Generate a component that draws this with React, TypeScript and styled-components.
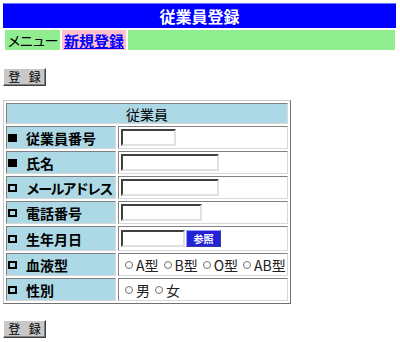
import styled, { createGlobalStyle } from "styled-components";

const GlobalStyle = createGlobalStyle`
  body {
    margin: 0;
    padding: 3px;
    background: #ffffff;
    font-family: "Noto Sans CJK JP", "DejaVu Sans", sans-serif;
    color: #000000;
  }
`;

const Page = styled.div`
  width: 394px;
`;

const TitleBar = styled.div`
  height: 25px;
  width: 393px;
  box-sizing: border-box;
  background: #0000ff;
  border-top: 1px solid #7070ff;
  color: #ffffff;
  font-size: 16px;
  font-weight: bold;
  display: flex;
  align-items: center;
  justify-content: center;
  line-height: 1;
`;

const MenuBar = styled.div`
  display: flex;
  gap: 2px;
  padding: 2px;
`;

const MenuCell = styled.div<{ $bg: string; $grow?: boolean }>`
  background: ${(p) => p.$bg};
  height: 20px;
  display: flex;
  align-items: center;
  padding: 0 2px;
  font-size: 14px;
  line-height: 1;
  flex: ${(p) => (p.$grow ? 1 : "none")};
`;

const MenuLabel = styled.span`
  letter-spacing: -1.5px;
  padding-right: 1px;
`;

const MenuLink = styled.a`
  color: #0000ff;
  font-weight: bold;
  text-decoration: underline;
  font-size: 15px;
`;

const SubmitButton = styled.button<{ $top: number }>`
  display: block;
  margin-top: ${(p) => p.$top}px;
  width: 43px;
  height: 18px;
  padding: 0 0 0 3px;
  background: #c8c8c8;
  border: 1px solid;
  border-color: #ffffff #404040 #404040 #ffffff;
  box-shadow: inset -1px -1px 0 #808080;
  font-family: inherit;
  font-size: 12px;
  line-height: 1;
  color: #000000;
  letter-spacing: 3px;
`;

const FormTable = styled.div`
  margin-top: 14px;
  width: 288px;
  box-sizing: border-box;
  border: 1px solid;
  border-color: #c8c8c8 #707070 #707070 #c8c8c8;
  padding: 2px;
  display: grid;
  grid-template-columns: 110px 1fr;
  gap: 2px;
`;

const HeaderCell = styled.div`
  grid-column: 1 / span 2;
  height: 21px;
  box-sizing: border-box;
  background: #add8e6;
  border: 1px solid;
  border-color: #808080 #d8d8d8 #d8d8d8 #808080;
  display: flex;
  align-items: center;
  justify-content: center;
  font-size: 14px;
  line-height: 1;
`;

const LabelCell = styled.div<{ $h: number }>`
  height: ${(p) => p.$h}px;
  box-sizing: border-box;
  background: #add8e6;
  border: 1px solid;
  border-color: #808080 #d8d8d8 #d8d8d8 #808080;
  display: flex;
  align-items: center;
  padding-left: 1px;
  font-size: 14px;
  font-weight: bold;
  line-height: 1;
  white-space: nowrap;
  overflow: hidden;
`;

const Mark = styled.span<{ $filled: boolean }>`
  width: 9px;
  height: 8px;
  box-sizing: border-box;
  margin-right: 9px;
  flex: none;
  background: ${(p) => (p.$filled ? "#000000" : "transparent")};
  border: 2px solid #000000;
`;

const LabelText = styled.span<{ $narrow?: boolean }>`
  letter-spacing: ${(p) => (p.$narrow ? "-1.8px" : "0")};
`;

const ValueCell = styled.div<{ $h: number }>`
  height: ${(p) => p.$h}px;
  box-sizing: border-box;
  background: #ffffff;
  border: 1px solid;
  border-color: #808080 #d8d8d8 #d8d8d8 #808080;
  display: flex;
  align-items: center;
  padding-left: 2px;
  gap: 1px;
  white-space: nowrap;
`;

const TextBox = styled.input<{ $w: number }>`
  width: ${(p) => p.$w}px;
  height: 17px;
  box-sizing: border-box;
  padding: 0;
  border: 2px solid;
  border-color: #404040 #e0e0e0 #e0e0e0 #404040;
  background: #ffffff;
  outline: none;
`;

const PickButton = styled.button`
  width: 35px;
  height: 17px;
  padding: 0;
  background: #2323d6;
  border: 1px solid;
  border-color: #9a9aff #3a3aa0 #3a3aa0 #9a9aff;
  color: #ffffff;
  font-family: inherit;
  font-size: 10px;
  font-weight: bold;
  line-height: 1;
`;

const RadioGroup = styled.div`
  display: flex;
  align-items: center;
  gap: 5px;
  padding-left: 4px;
`;

const RadioItem = styled.label`
  display: flex;
  align-items: center;
  gap: 3px;
  font-size: 14px;
  line-height: 1;
  color: #202020;
`;

const Radio = styled.input`
  appearance: none;
  margin: 0;
  width: 8px;
  height: 8px;
  border: 1px solid #707070;
  border-radius: 50%;
  background: #ffffff;
`;

type Row = {
  label: string;
  required: boolean;
  height: number;
  kind: "text" | "date" | "blood" | "sex";
  width?: number;
  narrow?: boolean;
};

const rows: Row[] = [
  { label: "従業員番号", required: true, height: 23, kind: "text", width: 55 },
  { label: "氏名", required: true, height: 23, kind: "text", width: 98 },
  { label: "メールアドレス", required: false, height: 23, kind: "text", width: 98, narrow: true },
  { label: "電話番号", required: false, height: 23, kind: "text", width: 81 },
  { label: "生年月日", required: false, height: 25, kind: "date" },
  { label: "血液型", required: false, height: 23, kind: "blood" },
  { label: "性別", required: false, height: 23, kind: "sex" },
];

const renderValue = (row: Row) => {
  switch (row.kind) {
    case "text":
      return <TextBox type="text" $w={row.width ?? 98} />;
    case "date":
      return (
        <>
          <TextBox type="text" $w={64} />
          <PickButton>参照</PickButton>
        </>
      );
    case "blood":
      return (
        <RadioGroup>
          {["A型", "B型", "O型", "AB型"].map((t) => (
            <RadioItem key={t}>
              <Radio type="radio" name="blood" />
              {t}
            </RadioItem>
          ))}
        </RadioGroup>
      );
    case "sex":
      return (
        <RadioGroup>
          {["男", "女"].map((t) => (
            <RadioItem key={t}>
              <Radio type="radio" name="sex" />
              {t}
            </RadioItem>
          ))}
        </RadioGroup>
      );
  }
};

const App: React.FC = () => {
  return (
    <Page>
      <GlobalStyle />
      <TitleBar>従業員登録</TitleBar>
      <MenuBar>
        <MenuCell $bg="#90ee90">
          <MenuLabel>メニュー</MenuLabel>
        </MenuCell>
        <MenuCell $bg="#ffc0cb">
          <MenuLink href="#">新規登録</MenuLink>
        </MenuCell>
        <MenuCell $bg="#90ee90" $grow />
      </MenuBar>

      <SubmitButton $top={16}>登 録</SubmitButton>

      <FormTable>
        <HeaderCell>従業員</HeaderCell>
        {rows.flatMap((row) => [
          <LabelCell key={row.label + "-l"} $h={row.height}>
            <Mark $filled={row.required} />
            <LabelText $narrow={row.narrow}>{row.label}</LabelText>
          </LabelCell>,
          <ValueCell key={row.label + "-v"} $h={row.height}>
            {renderValue(row)}
          </ValueCell>,
        ])}
      </FormTable>

      <SubmitButton $top={16}>登 録</SubmitButton>
    </Page>
  );
};

export default App;
